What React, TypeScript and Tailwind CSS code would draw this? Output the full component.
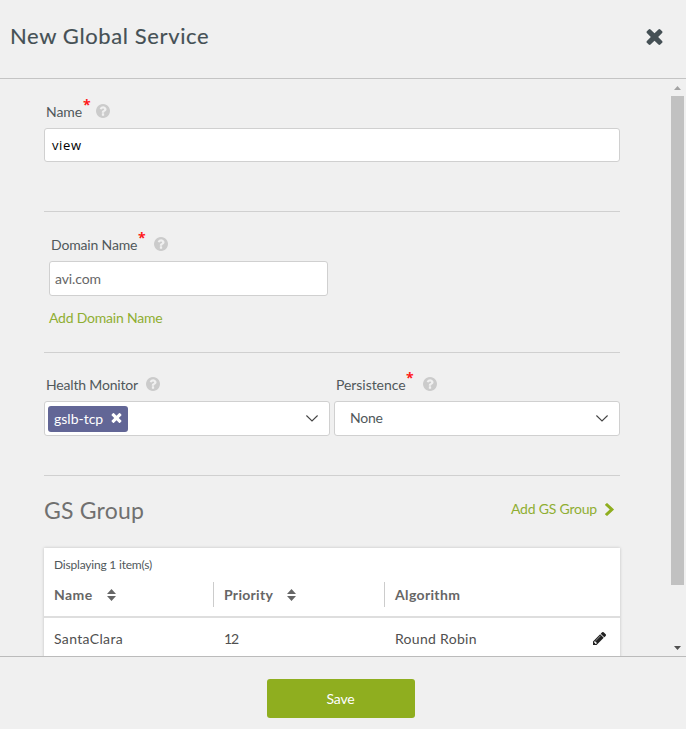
import React from "react";

type IconProps = { className?: string };

const CrossIcon = ({ className = "" }: IconProps) => (
  <svg viewBox="302 366 1188 1188" className={className} fill="currentColor">
    <path d="M1490 1322q0 40-28 68l-136 136q-28 28-68 28t-68-28l-294-294-294 294q-28 28-68 28t-68-28l-136-136q-28-28-28-68t28-68l294-294-294-294q-28-28-28-68t28-68l136-136q28-28 68-28t68 28l294 294 294-294q28-28 68-28t68 28l136 136q28 28 28 68t-28 68l-294 294 294 294q28 28 28 68z" />
  </svg>
);

const HelpIcon = () => (
  <svg viewBox="128 128 1536 1536" className="h-[14px] w-[14px] shrink-0 text-[#cbcbcb]" fill="currentColor">
    <path d="M1024 1376v-192q0-14-9-23t-23-9h-192q-14 0-23 9t-9 23v192q0 14 9 23t23 9h192q14 0 23-9t9-23zm256-672q0-88-55.5-163t-138.5-116-170-41q-243 0-371 213-15 24 8 42l132 100q7 6 19 6 16 0 25-12 53-68 86-92 34-24 86-24 48 0 85.500 26t37.500 59q0 38-20 61t-68 45q-63 28-115.500 86.500t-52.500 125.500v36q0 14 9 23t23 9h192q14 0 23-9t9-23q0-19 21.500-49.500t54.500-49.500q32-18 49-28.500t46-35 44.500-48 28-60.500 12.500-81zm384 192q0 209-103 385.500t-279.500 279.500-385.500 103-385.500-103-279.500-279.500-103-385.500 103-385.500 279.500-279.500 385.500-103 385.500 103 279.500 279.500 103 385.500z" />
  </svg>
);

const ChevronRight = () => (
  <svg viewBox="346 26 1036 1612" className="h-[13px] w-[9px]" fill="currentColor" preserveAspectRatio="none">
    <path d="M1363 877l-742 742q-19 19-45 19t-45-19l-166-166q-19-19-19-45t19-45l531-531-531-531q-19-19-19-45t19-45l166-166q19-19 45-19t45 19l742 742q19 19 19 45t-19 45z" />
  </svg>
);

const PencilIcon = () => (
  <svg viewBox="128 149 1515 1515" className="h-[13px] w-[13px] text-[#222]" fill="currentColor">
    <path d="M491 1536l91-91-235-235-91 91v107h128v128h107zm523-928q0-22-22-22-10 0-17 7l-542 542q-7 7-7 17 0 22 22 22 10 0 17-7l542-542q7-7 7-17zm-54-192l416 416-832 832h-416v-416zm683 96q0 53-37 90l-166 166-416-416 166-165q36-38 90-38 53 0 91 38l235 234q37 39 37 91z" />
  </svg>
);

const ChevronDown = () => (
  <svg viewBox="0 0 12 7" className="h-[7px] w-[12px]" fill="none" stroke="#444" strokeWidth="1.1">
    <path d="M.4.5 6 6 11.600.5" />
  </svg>
);

const SortIcon = () => (
  <svg viewBox="0 0 9 12" className="h-[12px] w-[9px] text-[#666]" fill="currentColor">
    <path d="M4.500 0 9 5H0zM4.500 12 9 7H0z" />
  </svg>
);

const Label = ({ text, textClass, required, gap }: { text: string; textClass: string; required?: boolean; gap: string }) => (
  <div className="flex h-[20px] items-center whitespace-nowrap text-[14px] leading-[20px] text-[#50585b]">
    <span className={textClass}>{text}</span>
    {required && (
      <span className="relative top-[-7px] w-[7px] font-['Open_Sans'] text-[14px] font-bold leading-[20px] text-[#ff1a1a]">*</span>
    )}
    <span className={`relative top-[-1px] ${gap}`}>
      <HelpIcon />
    </span>
  </div>
);

const box = "flex items-center rounded-[3px] border border-[#d0d0d0] bg-white";

export default function App() {
  return (
    <div className="flex h-[729px] w-[686px] flex-col overflow-hidden bg-[#f0f0f0] font-['Lato',sans-serif] text-[14px] text-[#50585b]">
      <header className="flex h-[79px] shrink-0 items-center justify-between border-b border-[#c4c4c4] pb-[6px] pl-[10px] pr-[23px]">
        <h1 className="whitespace-nowrap text-[22px] leading-[30px] tracking-[0.61px] text-[#455055] [-webkit-text-stroke:0.15px_#455055]">New Global Service</h1>
        <CrossIcon className="mt-px h-[16px] w-[17px] text-[#455055]" />
      </header>

      <div className="flex h-[577px] shrink-0 overflow-hidden">
        <main className="flex w-[671px] flex-col pl-[44px] pr-[51px]">
          <section className="h-[133px] shrink-0 border-b border-[#d0d0d0] pt-[23px]">
            <div className="pl-[2px]">
              <Label text="Name" textClass="w-[37px] tracking-[-0.1px]" required gap="ml-[6px]" />
            </div>
            <div className={`${box} mt-[6px] h-[34px] pl-[7px] font-['Open_Sans'] text-[13px] text-black`}>
              <span className="relative top-[1px] tracking-[0.6px]">view</span>
            </div>
          </section>

          <section className="h-[141px] shrink-0 border-b border-[#d0d0d0] pl-[5px] pt-[23px]">
            <div className="pl-[2px]">
              <Label text="Domain Name" textClass="w-[87px] tracking-[-0.16px]" required gap="ml-[9px]" />
            </div>
            <div className={`${box} mt-[6px] h-[35px] w-[279px] pl-[5px] tracking-[-0.1px] text-[#666]`}>avi.com</div>
            <a className="mt-[12px] block h-[20px] leading-[20px] tracking-[-0.22px] text-[#8fae32]">Add Domain Name</a>
          </section>

          <section className="flex h-[123px] shrink-0 gap-[4px] border-b border-[#d0d0d0] pt-[22px]">
            <div className="w-[286px]">
              <div className="pl-[2px]">
                <Label text="Health Monitor" textClass="w-[93px] tracking-[-0.18px]" gap="ml-[7px]" />
              </div>
              <div className={`${box} mt-[6px] h-[35px] justify-between pl-[3px] pr-[11px]`}>
                <span className="flex h-[26px] w-[80px] items-center justify-between rounded-[3px] bg-[#626696] pb-[1px] pl-[6px] pr-[6px] text-white">
                  gslb-tcp
                  <CrossIcon className="h-[10px] w-[11px]" />
                </span>
                <ChevronDown />
              </div>
            </div>
            <div className="w-[286px]">
              <div className="pl-[2px]">
                <Label text="Persistence" textClass="w-[70px] tracking-[-0.05px]" required gap="ml-[10px]" />
              </div>
              <div className={`${box} mt-[6px] h-[35px] justify-between pl-[15px] pr-[11px]`}>
                <span className="pb-[2px] tracking-[-0.2px]">None</span>
                <ChevronDown />
              </div>
            </div>
          </section>

          <div className="flex h-[72px] shrink-0 items-center justify-between pr-[6px]">
            <h2 className="pb-[4px] text-[23px] leading-[30px] tracking-[0.2px] text-[#707070]">GS Group</h2>
            <a className="flex items-center gap-[8px] pb-[6px] tracking-[-0.2px] text-[#8fae32]">
              <span className="pb-[1px]">Add GS Group</span>
              <span className="text-[#8fae1f]"><ChevronRight /></span>
            </a>
          </div>

          <section className="h-[120px] shrink-0 bg-white shadow-[0_0_3px_rgba(0,0,0,0.2)]">
            <div className="h-[34px] pl-[10px] pt-[9px] text-[12px] leading-[16px] tracking-[-0.2px]">Displaying 1 item(s)</div>
            <div className="flex h-[36px] border-b-2 border-[#dedede] text-[14px] font-bold leading-[25px] text-[#666]">
              <div className="flex h-[25px] w-[169px] items-center gap-[14px] pl-[10px]">
                <span className="tracking-[0.4px]">Name</span>
                <SortIcon />
              </div>
              <div className="flex h-[25px] w-[171px] items-center gap-[14px] border-l border-[#ccc] pl-[10px]">
                <span className="tracking-[0.3px]">Priority</span>
                <SortIcon />
              </div>
              <div className="h-[25px] border-l border-[#ccc] pl-[10px] tracking-[0.35px]">Algorithm</div>
            </div>
            <div className="flex h-[43px] items-center text-[#505050]">
              <span className="w-[180px] pb-[3px] pl-[10px] tracking-[0.35px]">SantaClara</span>
              <span className="w-[171px] pb-[3px] tracking-[-1px]">12</span>
              <span className="flex-1 pb-[3px] tracking-[0.3px]">Round Robin</span>
              <span className="pb-[2px] pr-[14px]"><PencilIcon /></span>
            </div>
          </section>
        </main>

        <div className="flex w-[13px] flex-col items-center">
          <svg viewBox="0 0 7 4" className="mt-[7px] h-[4px] w-[7px]" fill="#a3a3a3">
            <path d="M3.500 0 7 4H0z" />
          </svg>
          <div className="mt-[6px] h-[489px] w-[13px] bg-[#c1c1c1]" />
          <svg viewBox="0 0 7 4" className="mt-[61px] h-[4px] w-[7px]" fill="#505050">
            <path d="M0 0h7L3.500 4z" />
          </svg>
        </div>
      </div>

      <footer className="flex h-[73px] shrink-0 justify-center border-t border-[#bbb] pr-[5px] pt-[22px]">
        <button className="h-[39px] w-[148px] rounded-[3px] bg-[#8fae1f] pb-[1px] text-[14px] tracking-[-0.2px] text-white">Save</button>
      </footer>
    </div>
  );
}
